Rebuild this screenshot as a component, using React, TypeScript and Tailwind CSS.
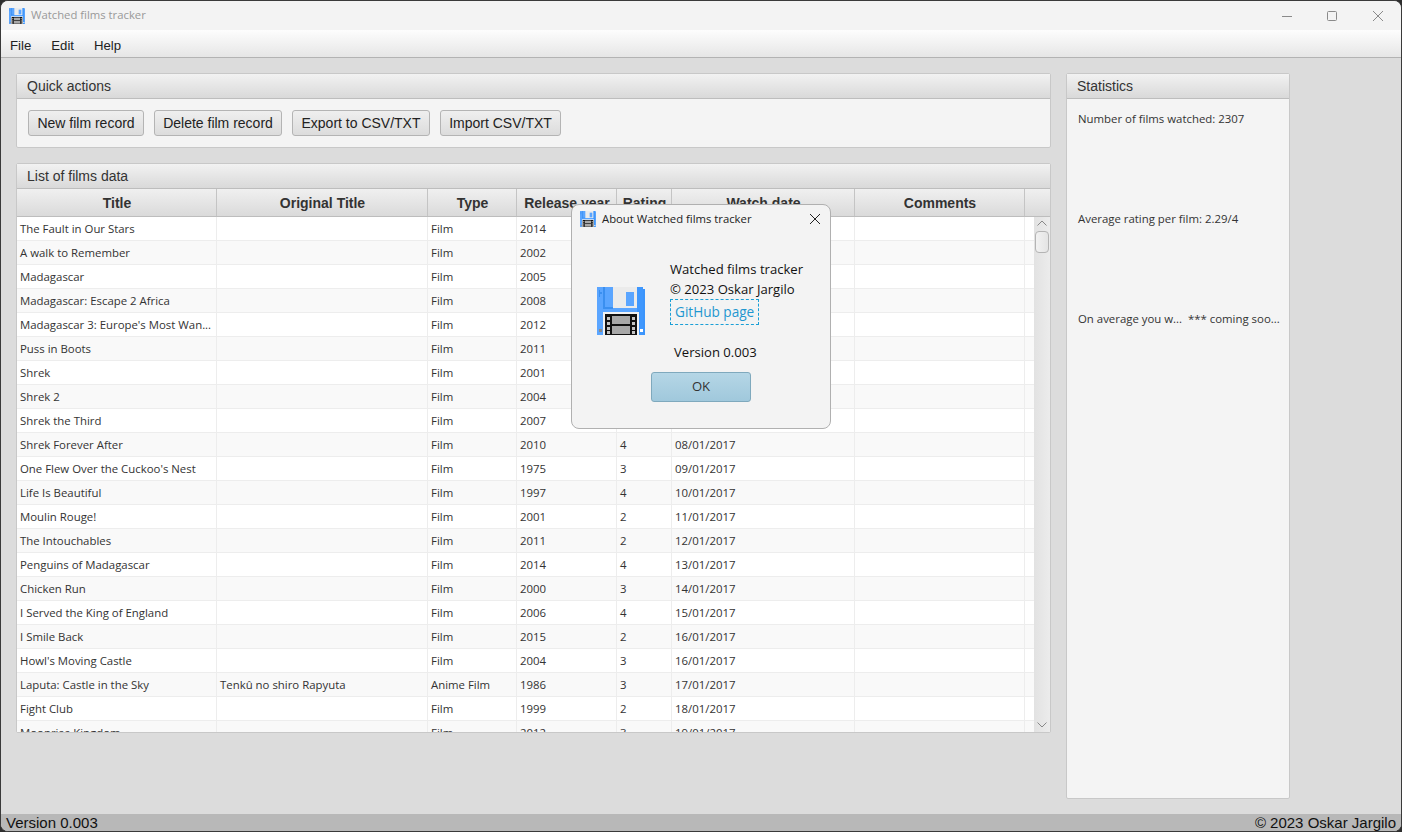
const films = [
  ['The Fault in Our Stars', '', 'Film', '2014', '3', '31/12/2016'],
  ['A walk to Remember', '', 'Film', '2002', '3', '01/01/2017'],
  ['Madagascar', '', 'Film', '2005', '3', '02/01/2017'],
  ['Madagascar: Escape 2 Africa', '', 'Film', '2008', '3', '03/01/2017'],
  ["Madagascar 3: Europe's Most Wan...", '', 'Film', '2012', '3', '04/01/2017'],
  ['Puss in Boots', '', 'Film', '2011', '3', '05/01/2017'],
  ['Shrek', '', 'Film', '2001', '4', '06/01/2017'],
  ['Shrek 2', '', 'Film', '2004', '4', '07/01/2017'],
  ['Shrek the Third', '', 'Film', '2007', '3', '07/01/2017'],
  ['Shrek Forever After', '', 'Film', '2010', '4', '08/01/2017'],
  ['One Flew Over the Cuckoo\'s Nest', '', 'Film', '1975', '3', '09/01/2017'],
  ['Life Is Beautiful', '', 'Film', '1997', '4', '10/01/2017'],
  ['Moulin Rouge!', '', 'Film', '2001', '2', '11/01/2017'],
  ['The Intouchables', '', 'Film', '2011', '2', '12/01/2017'],
  ['Penguins of Madagascar', '', 'Film', '2014', '4', '13/01/2017'],
  ['Chicken Run', '', 'Film', '2000', '3', '14/01/2017'],
  ['I Served the King of England', '', 'Film', '2006', '4', '15/01/2017'],
  ['I Smile Back', '', 'Film', '2015', '2', '16/01/2017'],
  ["Howl's Moving Castle", '', 'Film', '2004', '3', '16/01/2017'],
  ['Laputa: Castle in the Sky', 'Tenkû no shiro Rapyuta', 'Anime Film', '1986', '3', '17/01/2017'],
  ['Fight Club', '', 'Film', '1999', '2', '18/01/2017'],
  ['Moonrise Kingdom', '', 'Film', '2012', '3', '19/01/2017'],
]

const headers = ['Title', 'Original Title', 'Type', 'Release year', 'Rating', 'Watch date', 'Comments', '']

function Floppy({ size }: { size: number }) {
  return (
    <svg width={size} height={size} viewBox="0 0 48 48" shapeRendering={size < 48 ? 'auto' : 'crispEdges'} className="shrink-0">
      <rect x="0" y="0" width="46" height="48" fill="#5aa5ff" />
      <rect x="46" y="2" width="2" height="46" fill="#3b94fb" />
      <rect x="40" y="0" width="6" height="48" fill="#3f97fd" />
      <rect x="6" y="0" width="2" height="22" fill="#3a8ff0" />
      <rect x="6" y="20" width="10" height="2" fill="#3a8ff0" />
      <rect x="2" y="3" width="1" height="7" fill="#3a8ff0" />
      <rect x="2" y="5" width="3" height="2" fill="#3a8ff0" />
      <rect x="16" y="0" width="24" height="21" fill="#ebebeb" />
      <rect x="29" y="5" width="8" height="14" fill="#5aa5ff" />
      <rect x="6" y="25" width="36" height="23" fill="#f2f2f2" />
      <rect x="8" y="27" width="32" height="21" fill="#111111" />
      <rect x="15" y="29" width="18" height="8" fill="#a8a8a8" />
      <rect x="15" y="39" width="18" height="8" fill="#a8a8a8" />
      {[30, 35, 40, 44].map((y) => (
        <g key={y}>
          <rect x="10" y={y} width="3" height="3" fill="#c4c4c4" />
          <rect x="35" y={y} width="3" height="3" fill="#c4c4c4" />
        </g>
      ))}
      <rect x="2" y="42" width="3" height="3" fill="#8a8a8a" />
      <rect x="43" y="42" width="3" height="3" fill="#ffffff" />
    </svg>
  )
}

function CloseGlyph({ className }: { className: string }) {
  return (
    <svg width="10" height="10" viewBox="0 0 10 10" fill="none" stroke="currentColor" className={className}>
      <path d="M0 0L10 10M10 0L0 10" />
    </svg>
  )
}

function PanelHeader({ title }: { title: string }) {
  return (
    <div className="h-[25px] shrink-0 flex items-center px-[10px] bg-gradient-to-b from-[#f2f2f2] to-[#d9d9d9] border-b border-[#bdbdbd] text-[14px] text-[#333] font-['Liberation_Sans',sans-serif]">
      {title}
    </div>
  )
}

function ActionButton({ label, width }: { label: string; width: string }) {
  return (
    <button className={`${width} h-[26px] rounded-[3px] border border-[#b4b4b4] bg-gradient-to-b from-[#efefef] to-[#dcdcdc] text-[14px] text-[#222] font-['Liberation_Sans',sans-serif] whitespace-nowrap`}>
      {label}
    </button>
  )
}

export default function App() {
  return (
    <div className="relative w-[1402px] h-[832px] overflow-hidden bg-[#2e2e2e]">
      <div className="w-full h-full flex flex-col overflow-hidden rounded-lg border border-[#3a3a3a] bg-[#dcdcdc]">
        {/* Title bar */}
        <div className="h-[29px] shrink-0 flex items-center bg-[#f3f3f3] pl-[8px]">
          <Floppy size={16} />
          <span className="ml-[6px] text-[11.3px] text-[#999] font-['Open_Sans',sans-serif]">Watched films tracker</span>
          <div className="ml-auto flex items-center text-[#8a8a8a] pr-[18px] gap-[35px]">
            <svg width="10" height="10" viewBox="0 0 10 10" fill="none" stroke="currentColor">
              <path d="M0 5.5H10" />
            </svg>
            <svg width="10" height="10" viewBox="0 0 10 10" fill="none" stroke="currentColor">
              <rect x="0.5" y="0.5" width="9" height="9" rx="1" />
            </svg>
            <CloseGlyph className="ml-[1px]" />
          </div>
        </div>

        {/* Menu bar */}
        <div className="h-[28px] shrink-0 flex items-center gap-[20px] pl-[9px] pt-[5px] bg-gradient-to-b from-[#fdfdfd] to-[#e6e6e6] border-b border-[#b3b3b3] text-[13.2px] text-[#222] font-['Liberation_Sans',sans-serif]">
          <span>File</span>
          <span>Edit</span>
          <span>Help</span>
        </div>

        {/* Main */}
        <div className="flex-1 min-h-0 flex items-start gap-[15px] pl-[15px] pt-[15px]">
          <div className="w-[1035px] flex flex-col gap-[15px]">
            <section className="h-[75px] flex flex-col border border-[#c8c8c8] rounded-[2px] bg-[#f4f4f4]">
              <PanelHeader title="Quick actions" />
              <div className="flex gap-[10px] pl-[11px] pt-[11px]">
                <ActionButton label="New film record" width="w-[116px]" />
                <ActionButton label="Delete film record" width="w-[128px]" />
                <ActionButton label="Export to CSV/TXT" width="w-[138px]" />
                <ActionButton label="Import CSV/TXT" width="w-[121px]" />
              </div>
            </section>

            <section className="h-[570px] flex flex-col border border-[#c8c8c8] rounded-[2px] bg-[#f4f4f4]">
              <PanelHeader title="List of films data" />
              <div className="grid grid-cols-[200px_211px_89px_100px_55px_183px_170px_25px] h-[28px] shrink-0 border-b border-[#bdbdbd]">
                {headers.map((h, i) => (
                  <div
                    key={i}
                    className="flex items-center justify-center pl-[1px] pt-[1px] border-r last:border-r-0 border-[#c4c4c4] bg-gradient-to-b from-[#f0f0f0] to-[#dadada] text-[14px] font-bold text-[#333] font-['Liberation_Sans',sans-serif]"
                  >
                    {h}
                  </div>
                ))}
              </div>
              <div className="flex-1 min-h-0 flex">
                <div className="w-[1017px] overflow-hidden bg-white">
                  {films.map((row, i) => (
                    <div
                      key={i}
                      className={`grid grid-cols-[200px_211px_89px_100px_55px_183px_170px_9px] h-[24px] border-b border-[#ededed] text-[11.4px] text-[#333] font-['Open_Sans',sans-serif] ${i % 2 === 0 ? 'bg-white' : 'bg-[#f9f9f9]'}`}
                    >
                      {[...row, '', ''].map((cell, j) => (
                        <div key={j} className="flex items-center pl-[3px] pt-[1px] border-r border-[#ededed] last:border-r-0 whitespace-nowrap overflow-hidden">
                          {cell}
                        </div>
                      ))}
                    </div>
                  ))}
                </div>
                {/* Scrollbar */}
                <div className="flex-1 flex flex-col items-center bg-gradient-to-r from-[#e2e2e2] to-[#ececec] text-[#888]">
                  <svg width="10" height="6" viewBox="0 0 10 6" fill="none" stroke="currentColor" className="mt-[3px]">
                    <path d="M0.5 5.5L5 1L9.5 5.5" />
                  </svg>
                  <div className="w-[14px] h-[22px] mt-[5px] rounded-[4px] border border-[#b4b4b4] bg-gradient-to-r from-[#f2f2f2] to-[#e4e4e4]" />
                  <svg width="10" height="6" viewBox="0 0 10 6" fill="none" stroke="currentColor" className="mt-auto mb-[4px]">
                    <path d="M0.5 0.5L5 5L9.5 0.5" />
                  </svg>
                </div>
              </div>
            </section>
          </div>

          <section className="w-[224px] h-[726px] flex flex-col border border-[#c8c8c8] rounded-[2px] bg-[#f4f4f4]">
            <PanelHeader title="Statistics" />
            <div className="flex flex-col text-[11.4px] text-[#333] font-['Open_Sans',sans-serif] pl-[11px]">
              <div className="h-[100px] pt-[11px]">Number of films watched: 2307</div>
              <div className="h-[100px] pt-[11px]">Average rating per film: 2.29/4</div>
              <div className="h-[100px] pt-[11px] whitespace-nowrap">On average you w...&nbsp; *** coming soo...</div>
            </div>
          </section>
        </div>

        {/* Status bar */}
        <div className="h-[17px] shrink-0 flex items-center justify-between pl-[5px] pr-[5px] pt-[1px] bg-[#b8b8b8] text-[15px] text-[#111] font-['Liberation_Sans',sans-serif]">
          <span>Version 0.003</span>
          <span>© 2023 Oskar Jargilo</span>
        </div>
      </div>

      {/* About dialog */}
      <div className="absolute left-[571px] top-[204px] w-[260px] h-[225px] flex flex-col rounded-lg border border-[#b0b0b0] bg-[#f3f3f3] text-[#111] font-['Open_Sans',sans-serif]">
        <div className="h-[28px] flex items-center pl-[8px]">
          <Floppy size={16} />
          <span className="ml-[6px] text-[11.3px] text-[#222]">About Watched films tracker</span>
          <CloseGlyph className="ml-auto mr-[10px] text-[#222]" />
        </div>
        <div className="flex items-start pl-[25px] pt-[26px]">
          <div className="pt-[28px]">
            <Floppy size={48} />
          </div>
          <div className="ml-[25px] flex flex-col items-start text-[13.1px]">
            <span className="h-[20px] leading-[20px]">Watched films tracker</span>
            <span className="h-[20px] leading-[20px]">© 2023 Oskar Jargilo</span>
            <span className="h-[26px] leading-[24px] px-[4px] border border-dashed border-[#1a9fd6] text-[13.6px] text-[#1f97d0]">GitHub page</span>
          </div>
        </div>
        <div className="mt-[7px] text-[13.1px] leading-[20px] pl-[102px]">Version 0.003</div>
        <button className="self-center mt-[10px] w-[100px] h-[30px] rounded-[3px] border border-[#7fa9bd] bg-gradient-to-b from-[#b5d6e6] to-[#a0c8dc] text-[13.1px] text-[#333]">
          OK
        </button>
      </div>
    </div>
  )
}
